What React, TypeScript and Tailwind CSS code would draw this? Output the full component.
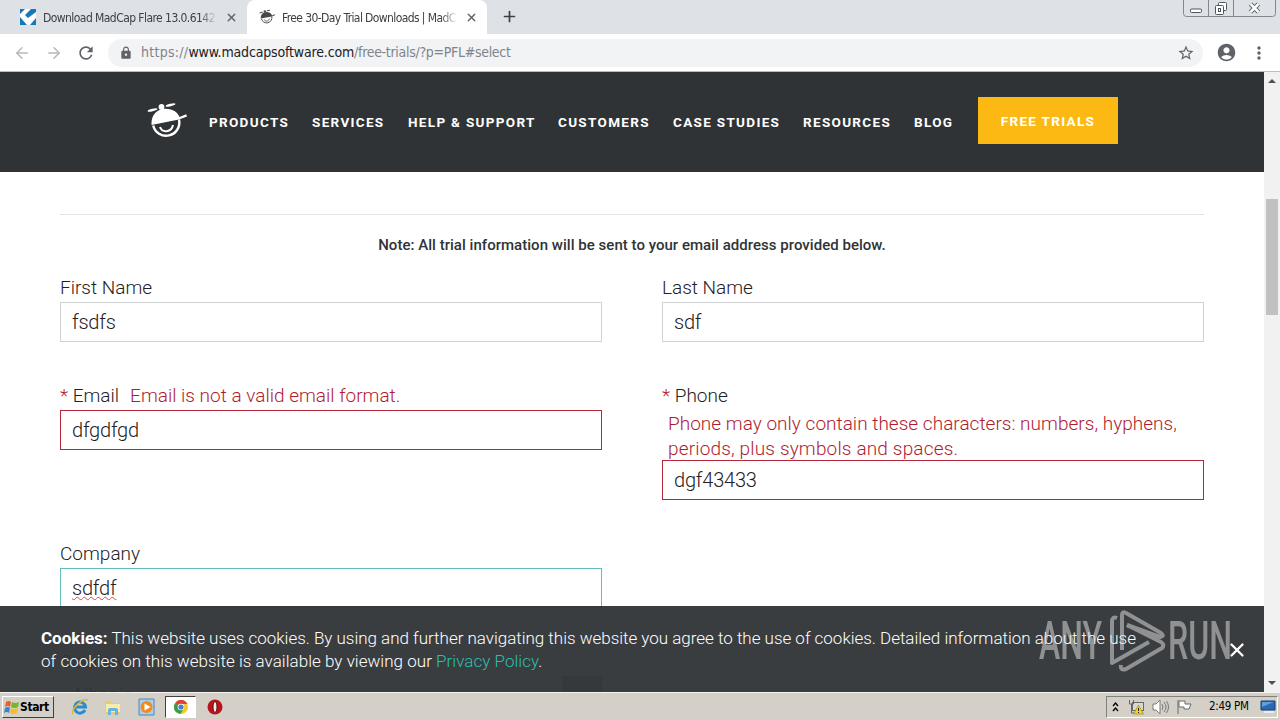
import { ArrowLeft, ArrowRight, Plus, X } from "lucide-react";
import { MdAccountCircle, MdLock, MdMoreVert, MdRefresh, MdStarBorder } from "react-icons/md";

const navItems = [
  { label: "PRODUCTS", width: "w-[103px]" },
  { label: "SERVICES", width: "w-[96px]" },
  { label: "HELP & SUPPORT", width: "w-[150px]" },
  { label: "CUSTOMERS", width: "w-[115px]" },
  { label: "CASE STUDIES", width: "w-[130px]" },
  { label: "RESOURCES", width: "w-[111px]" },
  { label: "BLOG", width: "w-[64px]" },
];

function CapLogo({ className, color }: { className: string; color: string }) {
  return (
    <svg viewBox="0 0 40 38" className={className} fill="none">
      <path d="M4.500 21C4.500 13 10 7 18 6.700c8-.2 13 4 14.500 8.300l6.700-2.700.8 2.100-8 3.100L4.500 23z" fill={color} />
      <ellipse cx="5.500" cy="8" rx="5" ry="1.300" transform="rotate(-14 5.500 8)" fill={color} />
      <ellipse cx="23.500" cy="3" rx="5" ry="1.300" transform="rotate(-14 23.500 3)" fill={color} />
      <circle cx="14.500" cy="5" r="2.900" fill={color} />
      <path d="M6.200 23.500A13.200 13.200 0 1 0 32 17.500" stroke={color} strokeWidth="2.400" />
      <path d="M13 25c2.200 6.300 11.500 5.500 13-2" stroke={color} strokeWidth="2" />
    </svg>
  );
}

function WindowButtons() {
  return (
    <svg width="94" height="18" className="ml-auto mr-[3px] shrink-0" fill="none">
      <path d="M.5 0V13.500Q.5 16.500 3.500 16.500H89.500Q92.500 16.500 92.500 13.500V0M25.500 0V16M50.500 0V16" stroke="#83888f" />
      <rect x="7.500" y="9" width="11" height="3.500" rx="1" stroke="#50555c" fill="#fff" />
      <rect x="35.500" y="2.500" width="8" height="8" rx="1" stroke="#50555c" fill="#fff" />
      <rect x="32.500" y="5.500" width="8" height="9" rx="1" stroke="#50555c" fill="#fff" />
      <rect x="35.500" y="8.500" width="2" height="3" stroke="#50555c" />
      <path d="m67.500 4 8 8m0-8-8 8" stroke="#50555c" strokeWidth="4.500" />
      <path d="m67.500 4 8 8m0-8-8 8" stroke="#fff" strokeWidth="2.500" />
    </svg>
  );
}

function TabStrip() {
  return (
    <div className="flex h-[34px] shrink-0 bg-[#dee1e6] text-[12px] text-[#3c4043]">
      <div className="flex w-[247px] items-center pl-5">
        <svg width="16" height="16" viewBox="0 0 16 16" className="mr-[7px] shrink-0">
          <path d="M0 0h16v16H0z" fill="#fff" />
          <path d="M0 0h5L0 5zM0 8l7 8H0zM11 0h5v3L8 9 5 6zM10 16l6-7v7z" fill="#1479b4" />
        </svg>
        <span className="w-[174px] overflow-hidden whitespace-nowrap pt-px tracking-[-0.56px] [mask-image:linear-gradient(to_right,black_90%,transparent)]">
          Download MadCap Flare 13.0.6142.
        </span>
        <X size={13} strokeWidth={2.5} className="ml-2 text-[#5f6368]" />
      </div>
      <div className="flex w-[240px] items-center rounded-t-lg bg-white pl-3">
        <CapLogo className="mr-[7px] h-4 w-4 shrink-0" color="#45484b" />
        <span className="w-[176px] overflow-hidden whitespace-nowrap pt-px tracking-[-0.6px] [mask-image:linear-gradient(to_right,black_90%,transparent)]">
          Free 30-Day Trial Downloads | MadC
        </span>
        <X size={13} strokeWidth={2.5} className="ml-[7px] text-[#5f6368]" />
      </div>
      <Plus size={17} strokeWidth={2.4} className="ml-[14px] mt-2" />
      <WindowButtons />
    </div>
  );
}

function Toolbar() {
  return (
    <div className="flex h-[38px] shrink-0 items-center border-b border-[#b9bcc0] bg-white pl-[13px]">
      <ArrowLeft size={18} className="text-[#b6b8bb]" />
      <ArrowRight size={18} className="ml-[14px] text-[#b6b8bb]" />
      <MdRefresh size={20} className="ml-[13px] text-[#5f6368]" />
      <div className="ml-[12px] flex h-[28px] w-[1095px] items-center rounded-full bg-[#f1f3f4] pl-[11px] pr-[8px]">
        <MdLock size={14} className="mr-[8px] text-[#5f6368]" />
        <span className="whitespace-nowrap text-[14px] text-[#80848a]">
          <span className="tracking-[0.28px]">https://</span>
          <span className="tracking-[-0.16px] text-[#202124]">www.madcapsoftware.com</span>
          <span className="tracking-[-0.3px]">/free-trials/?p=PFL#select</span>
        </span>
        <MdStarBorder size={18} className="ml-auto text-[#5f6368]" />
      </div>
      <MdAccountCircle size={21} className="ml-[13px] text-[#5f6368]" />
      <MdMoreVert size={20} className="ml-[12px] text-[#5f6368]" />
    </div>
  );
}

function SiteHeader() {
  return (
    <header className="flex h-[100px] items-center bg-[#2f3336] pl-[147px] text-[13.5px] font-bold tracking-[1.32px] text-white">
      <CapLogo className="mb-[2px] mr-[22px] h-[38px] w-[40px]" color="#fff" />
      {navItems.map((item) => (
        <a key={item.label} className={`${item.width} shrink-0 whitespace-nowrap`}>
          {item.label}
        </a>
      ))}
      <a className="mb-[3px] flex h-[47px] w-[140px] shrink-0 items-center justify-center bg-[#fdb913] pt-px">FREE TRIALS</a>
    </header>
  );
}

function TextBox({ value, border, misspelled }: { value: string; border: string; misspelled?: boolean }) {
  return (
    <div className={`flex h-10 items-center border bg-white px-[11px] text-[20px] tracking-[-0.2px] ${border}`}>
      <span
        className={
          misspelled
            ? "underline decoration-[#e0474c] decoration-wavy decoration-1 underline-offset-1 [text-decoration-skip-ink:none]"
            : ""
        }
      >
        {value}
      </span>
    </div>
  );
}

function TrialForm() {
  return (
    <main className="px-[60px] pt-[42px] text-[19px] font-light leading-[25px] text-[#1f2123]">
      <p className="border-t border-[#e3e4e5] pt-[20px] text-center text-[15px] font-medium leading-[20px] tracking-[0.03px] text-[#2f3336]">
        Note: All trial information will be sent to your email address provided below.
      </p>
      <div className="mt-[20px] grid grid-cols-2 gap-x-[60px]">
        <div className="h-[108px]">
          <div className="mb-[2px]">First Name</div>
          <TextBox value="fsdfs" border="border-[#cfd1d3]" />
        </div>
        <div>
          <div className="mb-[2px]">Last Name</div>
          <TextBox value="sdf" border="border-[#cfd1d3]" />
        </div>
        <div className="h-[158px]">
          <div className="mb-[2px]">
            <span className="text-[#b01c2e]">*</span> Email
            <span className="ml-[11px] text-[#b01c2e]">Email is not a valid email format.</span>
          </div>
          <TextBox value="dfgdfgd" border="border-[#b3283a]" />
        </div>
        <div>
          <div className="mb-[3px]">
            <span className="text-[#b01c2e]">*</span> Phone
          </div>
          <p className="-mb-px pl-[6px] text-[#b01c2e]">
            <span className="tracking-[0.02px]">Phone may only contain these characters: numbers, hyphens,</span>
            <br />
            <span className="tracking-[0.16px]">periods, plus symbols and spaces.</span>
          </p>
          <TextBox value="dgf43433" border="border-[#b3283a]" />
        </div>
        <div className="col-start-1">
          <div className="mb-[2px]">Company</div>
          <TextBox value="sdfdf" border="border-[#62bdc0]" misspelled />
        </div>
        <div className="col-start-1 mt-[41px]">
          <div className="mb-[2px]">Country</div>
          <div className="flex h-10 justify-between bg-[#f4f4f4] pl-3">
            <span className="pt-[6px]">Albania</span>
            <div className="w-10 bg-[#a9aaab]" />
          </div>
        </div>
      </div>
    </main>
  );
}

function CookieBar() {
  return (
    <div className="absolute inset-x-0 bottom-0 h-[86px] bg-[#2f3336]/95 pl-[41px] pt-[21px] text-[17px] font-light leading-[23px] text-white">
      <p className="whitespace-nowrap">
        <b className="font-bold">Cookies:</b>
        <span className="tracking-[-0.02px]">
          {" "}
          This website uses cookies. By using and further navigating this website you agree to the use of cookies.
          Detailed information about the use
        </span>
        <br />
        <span className="tracking-[0.03px]">
          of cookies on this website is available by viewing our <a className="text-[#2bbfad]">Privacy Policy</a>.
        </span>
      </p>
      <X size={22} strokeWidth={2.5} className="absolute right-4 top-[33px]" />
    </div>
  );
}

function Watermark() {
  return (
    <svg width="200" height="66" className="absolute bottom-[18px] right-[28px] opacity-55" fill="none">
      <g fill="#d5d7d7" fontFamily="Roboto" fontSize="53" fontWeight="500">
        <text x="3" y="51" textLength="63" lengthAdjust="spacingAndGlyphs">ANY</text>
        <text x="132" y="51" textLength="64" lengthAdjust="spacingAndGlyphs">RUN</text>
      </g>
      <g stroke="#d5d7d7" strokeWidth="4" strokeLinejoin="round">
        <path d="M81 10Q76 8 76 14V55L113 34" />
        <path d="M86 42V7Q86 3 90 5L125 25Q129 28 124 29L91 17" />
        <path d="M85 57Q84 63 90 61L126 40Q129 37 125 34L91 17" />
      </g>
    </svg>
  );
}

function Scrollbar() {
  return (
    <div className="flex w-4 shrink-0 flex-col items-center justify-between bg-[#f1f1f1] py-[7px]">
      <svg width="8" height="4">
        <path d="M0 4 4 0l4 4z" fill="#505050" />
      </svg>
      <div className="mb-[250px] h-[116px] w-3 bg-[#c1c1c1]" />
      <svg width="8" height="4">
        <path d="m0 0 4 4 4-4z" fill="#505050" />
      </svg>
    </div>
  );
}

function Taskbar() {
  return (
    <div className="flex h-7 shrink-0 items-center border-t border-[#f5f3ef] bg-[#d4d0c8] text-[11px] text-black">
      <div className="ml-[2px] flex h-[22px] w-[52px] items-center border border-b-[#404040] border-l-white border-r-[#404040] border-t-white pl-px text-[12px] font-bold">
        <svg width="16" height="16" viewBox="0 0 16 16" className="shrink-0">
          <path d="M2 3q3-2 5 0L6 8Q4 6 1 8z" fill="#e8602a" />
          <path d="M8 3q3 2 7 0l-1 5q-4 2-7 0z" fill="#78b52f" />
          <path d="M1 9q3-2 5 0l-1 5q-2-2-5 0z" fill="#3e83cf" />
          <path d="M7 9q3 2 7 0l-1 5q-4 2-7 0z" fill="#f4bd2c" />
        </svg>
        <span className="tracking-[-0.4px]">Start</span>
      </div>
      <svg width="18" height="18" viewBox="0 0 18 18" className="ml-[17px]" fill="none">
        <path d="M14 12A5.500 5.500 0 1 1 14.500 9H5" stroke="#258dd6" strokeWidth="3" />
        <path d="M2 16C-1 12 12-1 17 2" stroke="#e5b62c" strokeWidth="1.500" />
      </svg>
      <svg width="18" height="18" viewBox="0 0 18 18" className="ml-[15px]">
        <path d="M1 3h6l1 2h8v11H1z" fill="#e9cc67" />
        <path d="M2 6h14v8H2z" fill="#f8ebad" />
        <path d="M4 17v-5q0-2 2-2h6q2 0 2 2v5h-3v-4H7v4z" fill="#65b5df" />
      </svg>
      <svg width="18" height="18" viewBox="0 0 18 18" className="ml-[16px]">
        <path d="M1 1h15v16H1z" fill="#a9cfec" stroke="#4886bc" />
        <circle cx="8.500" cy="9" r="6" fill="#f28a1c" />
        <path d="m6.500 5.500 6 3.500-6 3.500z" fill="#fff" />
      </svg>
      <div className="ml-[9px] flex h-[22px] w-[31px] items-center justify-center border border-b-white border-l-[#404040] border-r-white border-t-[#404040] bg-white">
        <svg width="14" height="14" viewBox="0 0 14 14">
          <circle cx="7" cy="7" r="7" fill="#f7c927" />
          <path d="M7 7 1 3.300A7 7 0 0 1 13.500 4H7z" fill="#df4335" />
          <path d="M1 3.300A7 7 0 0 0 6.500 14L10 8z" fill="#3b9c4b" />
          <circle cx="7" cy="7" r="3.300" fill="#fff" />
          <circle cx="7" cy="7" r="2.600" fill="#437ed6" />
        </svg>
      </div>
      <svg width="16" height="16" viewBox="0 0 16 16" className="ml-[11px]">
        <circle cx="8" cy="8" r="7.500" fill="#b8141c" />
        <ellipse cx="8" cy="8" rx="2" ry="5.500" fill="#eee" stroke="#69080d" />
      </svg>
      <div className="ml-auto mr-0.5 flex h-[22px] w-[172px] items-center border border-b-white border-l-[#808080] border-r-white border-t-[#808080] pl-[5px]">
        <svg width="7" height="10" fill="none" stroke="#000" strokeWidth="1.3">
          <path d="m1 4 2.500-3L6 4M1 9l2.500-3L6 9" />
        </svg>
        <svg width="17" height="16" className="ml-[9px]" fill="none">
          <rect x="4.500" y="3.500" width="11" height="8" fill="#d8d8d4" stroke="#68686a" />
          <path d="M1.500 1v4h4V1M3.500 5v9H9" stroke="#666" />
          <path d="m10.500 6 5 9h-10z" fill="#f4d320" stroke="#a58b08" strokeWidth=".7" />
          <path d="M10.500 9v3m0 1v1" stroke="#222" />
        </svg>
        <svg width="17" height="16" className="ml-[7px]" fill="none" stroke="#77797b">
          <path d="M1 5h3l4-4v14l-4-4H1z" fill="#fff" />
          <path d="M10 5q2 3 0 6M12 3q4 5 0 10M14.500 2q4 6 0 12" />
        </svg>
        <svg width="17" height="16" className="ml-[7px]" fill="none" stroke="#696b6c">
          <path d="M2 1v14M3 2h6v3h6l-2 5H8V8H3z" fill="#fff" />
        </svg>
        <span className="ml-[16px] w-[51px] whitespace-nowrap pt-px text-[11.5px] tracking-[-0.3px]">2:49 PM</span>
        <svg width="17" height="15" className="ml-auto">
          <path d="M1 2h14v9H1z" fill="#2868b5" stroke="#173f79" />
          <path d="M2 3h12L2 8z" fill="#5aa2dc" />
          <path d="M4 13h10" stroke="#e4eef5" strokeWidth="2" />
        </svg>
      </div>
    </div>
  );
}

export default function App() {
  return (
    <div className="flex h-[720px] w-[1280px] flex-col overflow-hidden bg-white font-[Tahoma,'DejaVu_Sans_Condensed','DejaVu_Sans',sans-serif]">
      <TabStrip />
      <Toolbar />
      <div className="flex h-[620px] shrink-0">
        <div className="relative w-[1264px] overflow-hidden bg-white font-[Roboto,sans-serif]">
          <SiteHeader />
          <TrialForm />
          <CookieBar />
          <Watermark />
        </div>
        <Scrollbar />
      </div>
      <Taskbar />
    </div>
  );
}
